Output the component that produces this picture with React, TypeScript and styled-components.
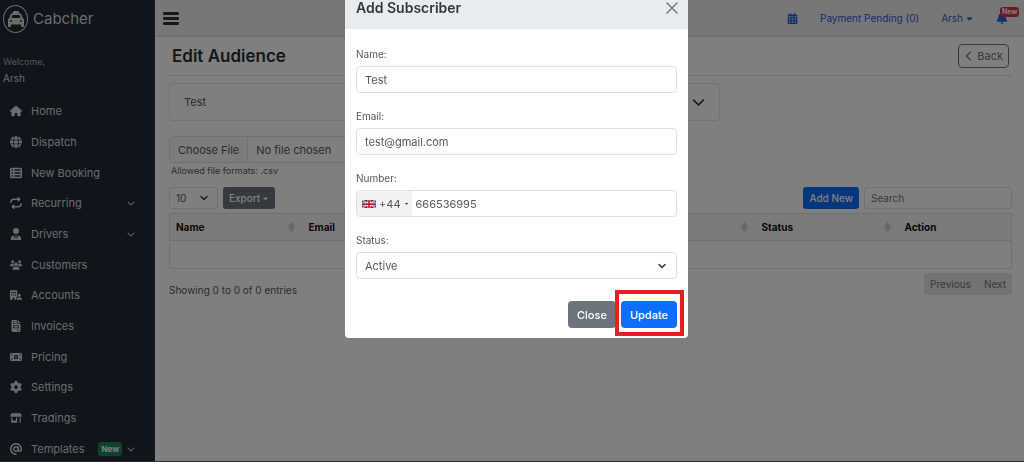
import React from "react";
import styled, { createGlobalStyle } from "styled-components";
import {
  FaAt,
  FaBell,
  FaBuildingUser,
  FaCalendarDays,
  FaCaretDown,
  FaChevronDown,
  FaChevronLeft,
  FaFileInvoice,
  FaGear,
  FaGlobe,
  FaHouse,
  FaMoneyBill1,
  FaRepeat,
  FaShop,
  FaTableList,
  FaTaxi,
  FaUserTie,
  FaUsers,
} from "react-icons/fa6";
import type { IconType } from "react-icons";

const GlobalStyle = createGlobalStyle`
  *, *::before, *::after { box-sizing: border-box; }
  html, body { margin: 0; height: 100%; overflow: hidden; }
  body {
    background: #fff;
    color: #54585d;
    font: 11px/16px Inter, "Liberation Sans", sans-serif;
  }
  button, input, select { font: inherit; color: inherit; margin: 0; }
  a { color: inherit; text-decoration: none; }
`;

const Shell = styled.div`
  display: flex;
  height: 100vh;
  overflow: hidden;
  border-bottom: 1px solid #555a66;
`;

const Sidebar = styled.aside`
  flex: 0 0 155px;
  overflow: hidden;
  background: #1e2a37;
  border-right: 1px solid #303943;
  color: #d6d6d6;
`;

const Brand = styled.a`
  display: flex;
  align-items: center;
  gap: 5px;
  height: 37px;
  padding-left: 3px;
  font-size: 15px;
`;

const BrandMark = styled.span`
  display: grid;
  place-items: center;
  width: 25px;
  height: 28px;
  border: 1px solid #d6d6d6;
  border-radius: 50%;
  font-size: 16px;
`;

const Welcome = styled.div`
  height: 59px;
  padding: 17px 3px 0;
  font-size: 10px;
`;

const Muted = styled.div`
  color: #a6a6a6;
  font-size: 9px;
`;

const NavList = styled.nav`
  display: grid;
  grid-auto-rows: 1fr;
  height: 368px;
`;

const NavLink = styled.a`
  display: flex;
  align-items: center;
  padding: 0 19px 0 9px;
`;

const NavIcon = styled.span`
  display: grid;
  place-items: center;
  width: 14px;
  margin-right: 8px;
  font-size: 12px;
`;

const NavText = styled.span`
  flex: 1;
`;

const NewTag = styled.span`
  margin-right: 5px;
  padding: 0 3px;
  border-radius: 3px;
  background: #198754;
  color: #fff;
  font-size: 8px;
  font-weight: 700;
  line-height: 14px;
`;

const Main = styled.div`
  flex: 1;
  min-width: 0;
`;

const TopBar = styled.header`
  display: flex;
  align-items: center;
  height: 37px;
  padding: 0 16px 0 8px;
  background: #eee;
  border-bottom: 1px solid #dcdcdc;
  color: #2360d8;
  font-size: 10px;
`;

const MenuButton = styled.button`
  display: grid;
  gap: 2px;
  width: 16px;
  margin-right: auto;
  padding: 0;
  border: 0;
  background: none;
`;

const MenuBar = styled.span`
  height: 3px;
  border-radius: 1px;
  background: #333;
`;

const TopLink = styled.a`
  display: flex;
  align-items: center;
  gap: 2px;
  margin-left: 22px;
`;

const BellLink = styled(TopLink)`
  position: relative;
  font-size: 12px;
`;

const BellTag = styled.span`
  position: absolute;
  left: 4px;
  top: -5px;
  padding: 0 2px;
  border-radius: 3px;
  background: #dc3545;
  color: #fff;
  font-size: 7px;
  font-weight: 700;
  line-height: 10px;
`;

const Content = styled.main`
  padding: 0 12px 0 14px;
`;

const TitleRow = styled.div`
  display: flex;
  align-items: center;
  justify-content: space-between;
  height: 39px;
  padding: 0 3px;
  border-bottom: 1px solid #dee2e6;
`;

const Title = styled.h1`
  margin: 0;
  color: #2a2c30;
  font-size: 17px;
  font-weight: 600;
`;

const BackButton = styled.button`
  display: flex;
  align-items: center;
  gap: 3px;
  height: 24px;
  padding: 0 5px;
  border: 1px solid #6c757d;
  border-radius: 4px;
  background: none;
  color: #6c757d;
`;

const Panel = styled.button`
  display: flex;
  align-items: center;
  justify-content: space-between;
  width: 65.4%;
  height: 38px;
  margin: 7px 0 15px;
  padding: 0 14px;
  border: 1px solid #e4e6e8;
  border-radius: 4px;
  background: none;
`;

const FileInput = styled.input`
  display: block;
  width: 50%;
  height: 27px;
  border: 1px solid #dee2e6;
  border-radius: 4px;
  line-height: 26px;

  &::file-selector-button {
    height: 26px;
    margin-right: 8px;
    padding: 0 8px;
    border: 0;
    border-right: 1px solid #dee2e6;
    background: #f8f9fa;
    color: inherit;
    font: inherit;
  }
`;

const Hint = styled.p`
  margin: 0 2px 8px;
  font-size: 9px;
`;

const Toolbar = styled.div`
  display: flex;
  align-items: center;
  gap: 5px;
  font-size: 10px;
`;

const Spacer = styled.span`
  flex: 1;
`;

const SelectWrap = styled.div<{ $width: string; $end: number }>`
  position: relative;
  width: ${(p) => p.$width};

  svg {
    position: absolute;
    top: 50%;
    right: ${(p) => p.$end}px;
    transform: translateY(-50%);
    pointer-events: none;
  }
`;

const Select = styled.select<{ $tall?: boolean }>`
  display: block;
  appearance: none;
  width: 100%;
  height: ${(p) => (p.$tall ? 27 : 22)}px;
  padding: 0 ${(p) => (p.$tall ? 8 : 6)}px;
  border: 1px solid #dee2e6;
  border-radius: ${(p) => (p.$tall ? 4 : 3)}px;
  background: none;
`;

const Button = styled.button<{ $tone: "primary" | "secondary"; $small?: boolean }>`
  display: flex;
  align-items: center;
  gap: 2px;
  height: ${(p) => (p.$small ? 22 : 27)}px;
  padding: 0 ${(p) => (p.$small ? 6 : 9)}px;
  border: 0;
  border-radius: ${(p) => (p.$small ? 3 : 4)}px;
  background: ${(p) => (p.$tone === "primary" ? "#0d6efd" : "#6c757d")};
  color: #fff;
  font-weight: 500;
`;

const SearchInput = styled.input`
  width: 148px;
  height: 22px;
  padding: 0 6px;
  border: 1px solid #dee2e6;
  border-radius: 3px;
  background: none;

  &::placeholder { color: #6f7377; opacity: 1; }
`;

const Table = styled.table`
  width: 100%;
  margin: 4px 0;
  border: 1px solid #dee2e6;
  border-collapse: collapse;
  table-layout: fixed;
`;

const HeadCell = styled.th<{ $width: string }>`
  width: ${(p) => p.$width};
  height: 27px;
  padding: 0 8px 0 6px;
  border-bottom: 1px solid #dee2e6;
  background: #f7f7f7;
  color: #111;
  font-size: 10px;
  text-align: left;
  font-weight: 700;
`;

const HeadInner = styled.div`
  display: flex;
  align-items: center;
  justify-content: space-between;
`;

const EmptyCell = styled.td`
  height: 28px;
  padding: 0;
`;

const TableFooter = styled.div`
  display: flex;
  align-items: flex-start;
  justify-content: space-between;
  font-size: 10px;
`;

const Summary = styled.p`
  margin: 9px 0 0;
`;

const Pager = styled.div`
  display: flex;
  overflow: hidden;
  border-radius: 3px;
  background: #e4e7ea;
`;

const PageButton = styled.button`
  height: 22px;
  padding: 0 6px;
  border: 0;
  background: none;
  color: #6c757d;

  & + & { border-left: 1px solid #dcdfe2; }
`;

const Overlay = styled.div`
  position: fixed;
  inset: 0;
  display: flex;
  align-items: flex-start;
  justify-content: center;
  padding-left: 9px;
  background: rgba(0, 0, 0, 0.5);
`;

const Dialog = styled.section`
  width: 100%;
  max-width: 343px;
  border-radius: 0 0 4px 4px;
  background: #fff;
`;

const DialogHeader = styled.header`
  display: flex;
  justify-content: space-between;
  height: 29px;
  padding: 0 10px 0 11px;
  background: #e9ecef;
`;

const DialogTitle = styled.h2`
  margin: 0;
  color: #33373b;
  font-size: 14px;
  font-weight: 600;
`;

const CloseIcon = styled.button`
  display: grid;
  place-items: center;
  height: 16px;
  padding: 0;
  border: 0;
  background: none;
`;

const Form = styled.form`
  display: grid;
  gap: 15px;
  padding: 17px 11px 10px;
`;

const Field = styled.div`
  display: grid;
  gap: 4px;
`;

const Label = styled.label`
  font-size: 10px;
`;

const TextInput = styled.input`
  width: 100%;
  height: 27px;
  padding: 0 8px;
  border: 1px solid #dee2e6;
  border-radius: 4px;
  background: #fff;
`;

const PhoneGroup = styled.div`
  display: flex;
  height: 27px;
  overflow: hidden;
  border: 1px solid #dee2e6;
  border-radius: 4px;
`;

const DialCode = styled.button`
  display: flex;
  align-items: center;
  gap: 3px;
  padding: 0 3px 0 5px;
  border: 0;
  background: #f2f2f2;
`;

const PhoneInput = styled.input`
  flex: 1;
  min-width: 0;
  padding: 0 4px;
  border: 0;
  background: none;
`;

const Actions = styled.div`
  display: flex;
  justify-content: flex-end;
  gap: 5px;
  padding-top: 7px;
`;

const Highlighted = styled.div`
  position: relative;

  &::after {
    content: "";
    position: absolute;
    inset: -11px -7px -8px -6px;
    border: 4px solid #ed1c24;
    pointer-events: none;
  }
`;

const Chevron = ({ size, weight = 2 }: { size: number; weight?: number }) => (
  <svg width={size} height={size} viewBox="0 0 16 16" fill="none" stroke="#343a40" strokeWidth={weight} strokeLinecap="round" strokeLinejoin="round" aria-hidden="true">
    <path d="m2 5 6 6 6-6" />
  </svg>
);

const SortMark = () => (
  <svg width="7" height="12" viewBox="0 0 7 12" fill="#cfd4d2" aria-hidden="true">
    <path d="M3.500 0 7 6 3.500 12 0 6z" />
  </svg>
);

const UkFlag = () => (
  <svg width="14" height="8" viewBox="0 0 28 16" aria-hidden="true">
    <path fill="#22307f" d="M0 0h28v16H0z" />
    <path stroke="#fff" strokeWidth="3" d="m0 0 28 16M28 0 0 16" />
    <path stroke="#d3182f" strokeWidth="1.200" d="m0 0 28 16M28 0 0 16" />
    <path stroke="#fff" strokeWidth="6" d="M14 0v16M0 8h28" />
    <path stroke="#d3182f" strokeWidth="3.500" d="M14 0v16M0 8h28" />
  </svg>
);

interface NavEntry {
  label: string;
  icon: IconType;
  expandable?: boolean;
  fresh?: boolean;
}

const navigation: NavEntry[] = [
  { label: "Home", icon: FaHouse },
  { label: "Dispatch", icon: FaGlobe },
  { label: "New Booking", icon: FaTableList },
  { label: "Recurring", icon: FaRepeat, expandable: true },
  { label: "Drivers", icon: FaUserTie, expandable: true },
  { label: "Customers", icon: FaUsers },
  { label: "Accounts", icon: FaBuildingUser },
  { label: "Invoices", icon: FaFileInvoice },
  { label: "Pricing", icon: FaMoneyBill1 },
  { label: "Settings", icon: FaGear },
  { label: "Tradings", icon: FaShop },
  { label: "Templates", icon: FaAt, expandable: true, fresh: true },
];

const columns = [
  { label: "Name", width: "133px" },
  { label: "Email", width: "auto" },
  { label: "Number", width: "auto" },
  { label: "Status", width: "143px" },
  { label: "Action", width: "113px" },
];

export default function App() {
  return (
    <>
      <GlobalStyle />
      <Shell>
        <Sidebar>
          <Brand href="#">
            <BrandMark><FaTaxi /></BrandMark>
            Cabcher
          </Brand>
          <Welcome>
            <Muted>Welcome,</Muted>
            <div>Arsh</div>
          </Welcome>
          <NavList>
            {navigation.map(({ label, icon: Icon, expandable, fresh }) => (
              <NavLink href="#" key={label}>
                <NavIcon><Icon /></NavIcon>
                <NavText>{label}</NavText>
                {fresh && <NewTag>New</NewTag>}
                {expandable && <FaChevronDown size={8} />}
              </NavLink>
            ))}
          </NavList>
        </Sidebar>
        <Main>
          <TopBar>
            <MenuButton aria-label="Toggle menu"><MenuBar /><MenuBar /><MenuBar /></MenuButton>
            <TopLink href="#" aria-label="Calendar"><FaCalendarDays size={11} /></TopLink>
            <TopLink href="#">Payment Pending (0)</TopLink>
            <TopLink href="#">Arsh <FaCaretDown size={9} /></TopLink>
            <BellLink href="#" aria-label="Notifications"><FaBell /><BellTag>New</BellTag></BellLink>
          </TopBar>
          <Content>
            <TitleRow>
              <Title>Edit Audience</Title>
              <BackButton><FaChevronLeft size={10} />Back</BackButton>
            </TitleRow>
            <Panel>Test<Chevron size={13} weight={2} /></Panel>
            <FileInput type="file" accept=".csv" aria-label="Audience file" />
            <Hint>Allowed file formats: .csv</Hint>
            <Toolbar>
              <SelectWrap $width="49px" $end={10}>
                <Select aria-label="Rows per page"><option>10</option></Select>
                <Chevron size={8} weight={3} />
              </SelectWrap>
              <Button $tone="secondary" $small>Export <FaCaretDown size={7} /></Button>
              <Spacer />
              <Button $tone="primary" $small>Add New</Button>
              <SearchInput type="search" placeholder="Search" aria-label="Search" />
            </Toolbar>
            <Table>
              <thead>
                <tr>
                  {columns.map(({ label, width }, index) => (
                    <HeadCell key={label} $width={width}>
                      <HeadInner>{label}{index < columns.length - 1 && <SortMark />}</HeadInner>
                    </HeadCell>
                  ))}
                </tr>
              </thead>
              <tbody>
                <tr><EmptyCell colSpan={columns.length} /></tr>
              </tbody>
            </Table>
            <TableFooter>
              <Summary>Showing 0 to 0 of 0 entries</Summary>
              <Pager>
                <PageButton>Previous</PageButton>
                <PageButton>Next</PageButton>
              </Pager>
            </TableFooter>
          </Content>
        </Main>
      </Shell>
      <Overlay>
        <Dialog role="dialog" aria-modal="true" aria-labelledby="dialog-title">
          <DialogHeader>
            <DialogTitle id="dialog-title">Add Subscriber</DialogTitle>
            <CloseIcon aria-label="Close dialog">
              <svg width="12" height="12" viewBox="0 0 12 12" stroke="#777b7f" strokeWidth="1.500" strokeLinecap="round" aria-hidden="true">
                <path d="m1 1 10 10M11 1 1 11" />
              </svg>
            </CloseIcon>
          </DialogHeader>
          <Form onSubmit={(event) => event.preventDefault()}>
            <Field>
              <Label htmlFor="name">Name:</Label>
              <TextInput id="name" defaultValue="Test" />
            </Field>
            <Field>
              <Label htmlFor="email">Email:</Label>
              <TextInput id="email" type="email" defaultValue="test@gmail.com" />
            </Field>
            <Field>
              <Label htmlFor="number">Number:</Label>
              <PhoneGroup>
                <DialCode type="button" aria-label="Country code +44"><UkFlag />+44<FaCaretDown size={5} /></DialCode>
                <PhoneInput id="number" type="tel" defaultValue="666536995" />
              </PhoneGroup>
            </Field>
            <Field>
              <Label htmlFor="status">Status:</Label>
              <SelectWrap $width="100%" $end={11}>
                <Select id="status" $tall><option>Active</option></Select>
                <Chevron size={8} weight={3} />
              </SelectWrap>
            </Field>
            <Actions>
              <Button type="button" $tone="secondary">Close</Button>
              <Highlighted><Button type="submit" $tone="primary">Update</Button></Highlighted>
            </Actions>
          </Form>
        </Dialog>
      </Overlay>
    </>
  );
}
